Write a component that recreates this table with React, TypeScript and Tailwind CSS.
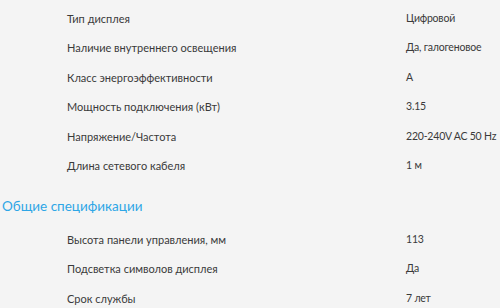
import React from "react";

const rows1: [string, string][] = [
  ["Тип дисплея", "Цифровой"],
  ["Наличие внутреннего освещения", "Да, галогеновое"],
  ["Класс энергоэффективности", "A"],
  ["Мощность подключения (кВт)", "3.15"],
  ["Напряжение/Частота", "220-240V AC 50 Hz"],
  ["Длина сетевого кабеля", "1 м"],
];

const rows2: [string, string][] = [
  ["Высота панели управления, мм", "113"],
  ["Подсветка символов дисплея", "Да"],
  ["Срок службы", "7 лет"],
];

function Row({ label, value }: { label: string; value: string }) {
  return (
    <div className="flex h-[29.5px] items-center whitespace-nowrap text-[#3a3a3a]">
      <div className="w-[406px] pl-[67px] shrink-0 text-[11px]">{label}</div>
      <div className="text-[10.5px] tracking-[-0.2px]">{value}</div>
    </div>
  );
}

export default function App() {
  return (
    <div
      className="w-[500px] h-[308px] overflow-hidden bg-[#f4f4f4] pt-[4px]"
      style={{ fontFamily: "Lato, 'Liberation Sans', sans-serif" }}
    >
      {rows1.map(([l, v]) => (
        <Row key={l} label={l} value={v} />
      ))}
      <div className="h-[44px] flex items-end pb-[9px] pl-[2px] text-[13.5px] text-[#2ea6e6]">
        Общие спецификации
      </div>
      {rows2.map(([l, v]) => (
        <Row key={l} label={l} value={v} />
      ))}
    </div>
  );
}
